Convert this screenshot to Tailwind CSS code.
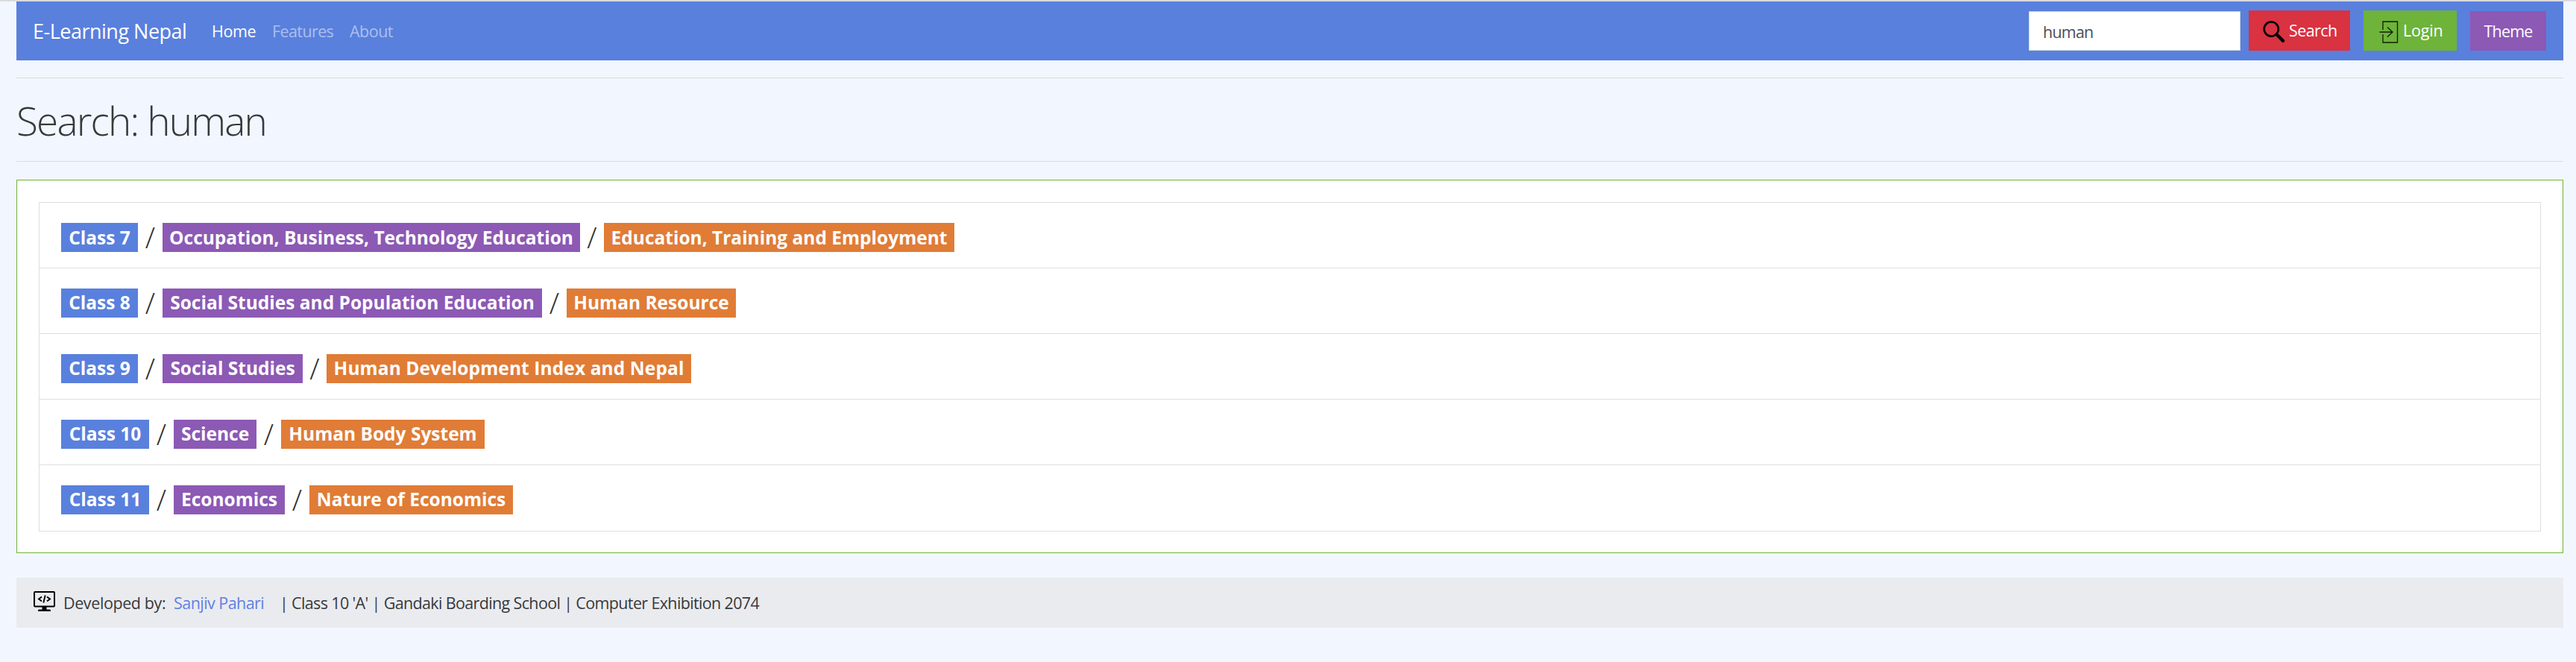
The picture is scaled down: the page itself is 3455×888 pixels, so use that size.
<!DOCTYPE html>
<html lang="en">
<head>
<meta charset="utf-8">
<title>Search: human - E-Learning Nepal</title>
<script src="https://cdn.jsdelivr.net/npm/@tailwindcss/browser@4"></script>
</head>
<body class="bg-[#f2f7ff] font-['Open_Sans','Noto_Sans',sans-serif] text-[21.5px] text-[#373a3c] border-t-2 border-[#d9dadf] h-[888px] overflow-hidden">
<div class="ml-[22px] w-[3416px]">
  <nav class="h-[79px] bg-[#5980dd] flex items-center text-white pl-[22px] pr-[23px]">
    <a class="w-[240px] pt-[2px] text-[27px] tracking-[-0.5px] whitespace-nowrap">E-Learning Nepal</a>
    <a class="w-[81px] pt-[2px] tracking-[-0.4px]">Home</a>
    <a class="w-[104px] pt-[2px] tracking-[-0.6px] text-white/50">Features</a>
    <a class="pt-[2px] tracking-[-0.5px] text-white/50">About</a>
    <form class="ml-auto flex items-end h-[54px] -mt-px">
      <input class="w-[284px] h-[53px] bg-white border border-[#ced4da] pl-[18px] pt-[2px] text-[#495057] tracking-[-0.8px] outline-none" value="human">
      <button type="button" class="ml-[11px] w-[136px] h-[54px] bg-[#d93241] flex items-center pl-[19px]">
        <svg class="w-[30px] h-[30px] mt-[4px]" viewBox="0 0 30 30" fill="none" stroke="#000"><circle cx="11.3" cy="11" r="9.6" stroke-width="2.6"/><path d="M18 17.8L20 19.8" stroke-width="3"/><path d="M20 19.8L27 26.8" stroke-width="4.4" stroke-linecap="round"/></svg>
        <span class="ml-[5px] tracking-[-0.6px]">Search</span>
      </button>
      <button type="button" class="ml-[18px] w-[125px] h-[54px] bg-[#6eb33a] flex items-center pl-[21px]">
        <svg class="w-[26px] h-[30px] mt-[4px]" viewBox="0 0 26 30" fill="none" stroke="#102008" stroke-width="1.3"><path d="M5 12V1H24.5V29H5V18M0.5 15H18M11 8.5L18 15L11 21.5"/></svg>
        <span class="ml-[6px] tracking-[-0.2px]">Login</span>
      </button>
      <button type="button" class="ml-[18px] w-[102px] h-[53px] pt-[2px] bg-[#8c59b5] tracking-[-0.8px]">Theme</button>
    </form>
  </nav>
  <hr class="mt-[23px] border-t border-[#d9dee2]">
  <h1 class="h-[111px] pt-[2px] flex items-center text-[53px] font-light tracking-[-1.8px]">Search: human</h1>
  <hr class="border-t border-[#d9dee2]">
  <main class="mt-6 h-[501px] bg-white border border-[#6eb33a] px-[29px] pt-[29px]">
    <ul class="border border-[#dddfe0] divide-y divide-[#dddfe0] text-[24.5px] font-bold text-white">
      <li class="h-[88px] pt-[27px] pl-[29px] flex items-start whitespace-nowrap">
        <span class="w-[103px] h-[39px] pt-[2px] bg-[#5980dd] flex items-center justify-center">Class 7</span>
        <span class="w-[33px] text-center text-[39px] leading-[37px] font-light text-[#2c2e30]">/</span>
        <span class="w-[560px] h-[39px] pt-[2px] bg-[#8c59b5] flex items-center justify-center">Occupation, Business, Technology Education</span>
        <span class="w-[32px] text-center text-[39px] leading-[37px] font-light text-[#2c2e30]">/</span>
        <span class="w-[470px] h-[39px] pt-[2px] bg-[#e07c36] flex items-center justify-center">Education, Training and Employment</span>
      </li>
      <li class="h-[88px] pt-[27px] pl-[29px] flex items-start whitespace-nowrap">
        <span class="w-[103px] h-[39px] bg-[#5980dd] flex items-center justify-center">Class 8</span>
        <span class="w-[33px] text-center text-[39px] leading-[37px] font-light text-[#2c2e30]">/</span>
        <span class="w-[509px] h-[39px] bg-[#8c59b5] flex items-center justify-center">Social Studies and Population Education</span>
        <span class="w-[33px] text-center text-[39px] leading-[37px] font-light text-[#2c2e30]">/</span>
        <span class="w-[227px] h-[39px] bg-[#e07c36] flex items-center justify-center">Human Resource</span>
      </li>
      <li class="h-[88px] pt-[27px] pl-[29px] flex items-start whitespace-nowrap">
        <span class="w-[103px] h-[39px] bg-[#5980dd] flex items-center justify-center">Class 9</span>
        <span class="w-[33px] text-center text-[39px] leading-[37px] font-light text-[#2c2e30]">/</span>
        <span class="w-[188px] h-[39px] bg-[#8c59b5] flex items-center justify-center">Social Studies</span>
        <span class="w-[32px] text-center text-[39px] leading-[37px] font-light text-[#2c2e30]">/</span>
        <span class="w-[489px] h-[39px] bg-[#e07c36] flex items-center justify-center tracking-[0.1px]">Human Development Index and Nepal</span>
      </li>
      <li class="h-[88px] pt-[27px] pl-[29px] flex items-start whitespace-nowrap">
        <span class="w-[118px] h-[39px] bg-[#5980dd] flex items-center justify-center">Class 10</span>
        <span class="w-[33px] text-center text-[39px] leading-[37px] font-light text-[#2c2e30]">/</span>
        <span class="w-[111px] h-[39px] bg-[#8c59b5] flex items-center justify-center">Science</span>
        <span class="w-[33px] text-center text-[39px] leading-[37px] font-light text-[#2c2e30]">/</span>
        <span class="w-[273px] h-[39px] bg-[#e07c36] flex items-center justify-center">Human Body System</span>
      </li>
      <li class="h-[88px] pt-[27px] pl-[29px] flex items-start whitespace-nowrap">
        <span class="w-[118px] h-[39px] bg-[#5980dd] flex items-center justify-center">Class 11</span>
        <span class="w-[33px] text-center text-[39px] leading-[37px] font-light text-[#2c2e30]">/</span>
        <span class="w-[149px] h-[39px] bg-[#8c59b5] flex items-center justify-center">Economics</span>
        <span class="w-[33px] text-center text-[39px] leading-[37px] font-light text-[#2c2e30]">/</span>
        <span class="w-[273px] h-[39px] bg-[#e07c36] flex items-center justify-center">Nature of Economics</span>
      </li>
    </ul>
  </main>
  <footer class="mt-[33px] h-[67px] bg-[#eaebef] flex items-center pl-[23px] whitespace-nowrap">
    <svg class="w-[29px] h-[27px] mb-[5px]" viewBox="0 0 29 27"><rect x="1" y="1" width="27" height="19.5" rx="1" fill="none" stroke="#000" stroke-width="2"/><path d="M11.5 20h6v4.5h4.5q1 0 1 2.5h-17q0-2.5 1-2.5h4.5z"/><path d="M11 7.5L7 10.5L11 13.5M18 7.5L22 10.5L18 13.5M15.7 5.5L13.3 15.5" fill="none" stroke="#000" stroke-width="1.9"/></svg>
    <span class="ml-[11px] w-[148px] pt-[2px] tracking-[-0.4px]">Developed by:</span>
    <a class="w-[142px] pt-[2px] text-[#5f80e2] tracking-[-0.55px]">Sanjiv Pahari</a>
    <span class="pt-[2px] tracking-[-0.64px]">| Class 10 'A' | Gandaki Boarding School | Computer Exhibition 2074</span>
  </footer>
</div>
</body>
</html>
